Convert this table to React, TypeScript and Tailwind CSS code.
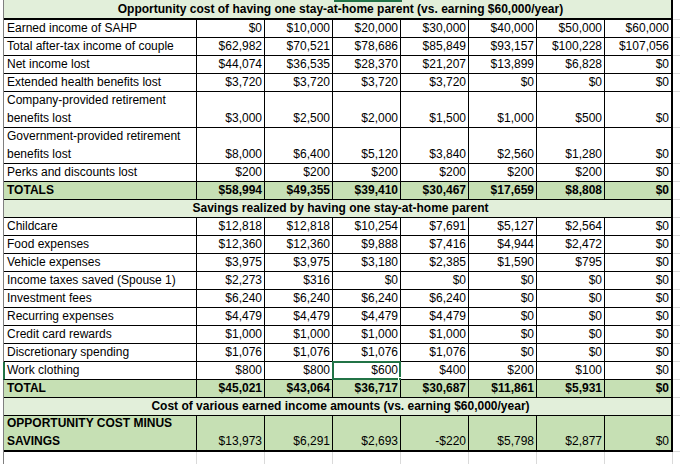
import React from "react";

type RowData = {
  label: React.ReactNode;
  values: string[];
  tall?: boolean;
  total?: boolean;
  green?: boolean;
  selectedCol?: number;
};

const opportunity: RowData[] = [
  { label: "Earned income of SAHP", values: ["$0", "$10,000", "$20,000", "$30,000", "$40,000", "$50,000", "$60,000"] },
  { label: "Total after-tax income of couple", values: ["$62,982", "$70,521", "$78,686", "$85,849", "$93,157", "$100,228", "$107,056"] },
  { label: "Net income lost", values: ["$44,074", "$36,535", "$28,370", "$21,207", "$13,899", "$6,828", "$0"] },
  { label: "Extended health benefits lost", values: ["$3,720", "$3,720", "$3,720", "$3,720", "$0", "$0", "$0"] },
  {
    label: (<>Company-provided retirement<br />benefits lost</>),
    tall: true,
    values: ["$3,000", "$2,500", "$2,000", "$1,500", "$1,000", "$500", "$0"],
  },
  {
    label: (<>Government-provided retirement<br />benefits lost</>),
    tall: true,
    values: ["$8,000", "$6,400", "$5,120", "$3,840", "$2,560", "$1,280", "$0"],
  },
  { label: "Perks and discounts lost", values: ["$200", "$200", "$200", "$200", "$200", "$200", "$0"] },
  { label: "TOTALS", total: true, values: ["$58,994", "$49,355", "$39,410", "$30,467", "$17,659", "$8,808", "$0"] },
];

const savings: RowData[] = [
  { label: "Childcare", values: ["$12,818", "$12,818", "$10,254", "$7,691", "$5,127", "$2,564", "$0"] },
  { label: "Food expenses", values: ["$12,360", "$12,360", "$9,888", "$7,416", "$4,944", "$2,472", "$0"] },
  { label: "Vehicle expenses", values: ["$3,975", "$3,975", "$3,180", "$2,385", "$1,590", "$795", "$0"] },
  { label: "Income taxes saved (Spouse 1)", values: ["$2,273", "$316", "$0", "$0", "$0", "$0", "$0"] },
  { label: "Investment fees", values: ["$6,240", "$6,240", "$6,240", "$6,240", "$0", "$0", "$0"] },
  { label: "Recurring expenses", values: ["$4,479", "$4,479", "$4,479", "$4,479", "$0", "$0", "$0"] },
  { label: "Credit card rewards", values: ["$1,000", "$1,000", "$1,000", "$1,000", "$0", "$0", "$0"] },
  { label: "Discretionary spending", values: ["$1,076", "$1,076", "$1,076", "$1,076", "$0", "$0", "$0"] },
  { label: "Work clothing", selectedCol: 2, values: ["$800", "$800", "$600", "$400", "$200", "$100", "$0"] },
  { label: "TOTAL", total: true, values: ["$45,021", "$43,064", "$36,717", "$30,687", "$11,861", "$5,931", "$0"] },
];

const Row = ({ row }: { row: RowData }) => {
  const h = row.tall ? "h-[36px]" : "h-[18px]";
  const bg = row.total || row.green ? "bg-[#c6e0b4]" : "bg-white";
  return (
    <>
      <div
        className={`${h} ${bg} border-b border-r border-black px-[3px] flex items-end leading-[18px] ${row.total || row.green ? "font-bold" : ""} ${row.selectedCol !== undefined ? "border-l-2 border-l-[#217346] -ml-[1px] pl-[2px]" : ""}`}
      >
        <span>{row.label}</span>
      </div>
      {row.values.map((v, i) => (
        <div
          key={i}
          className={`${h} ${bg} relative border-b border-black ${i === 6 ? "border-r-2" : "border-r"} px-[2px] flex items-end justify-end leading-[18px] ${row.total ? "font-bold" : ""}`}
        >
          {v}
          {row.selectedCol === i && (
            <>
              <div className="absolute -left-[1px] -top-[1px] -right-[1px] -bottom-[1px] border-2 border-[#217346]" />
              <div className="absolute -right-[3px] -bottom-[3px] w-[5px] h-[5px] bg-[#217346] border border-white" />
            </>
          )}
        </div>
      ))}
      <div className={`${h} border-b border-[#dadada]`} />
    </>
  );
};

const Banner = ({ text, title }: { text: string; title?: boolean }) => (
  <>
    <div
      className={`col-span-8 ${title ? "h-[20px] border-b-2" : "h-[18px] border-b"} bg-[#e2efda] border-black border-r-2 flex items-end justify-center font-bold leading-[18px]`}
    >
      <span className="pl-[6px]">{text}</span>
    </div>
    <div className={`${title ? "h-[20px]" : "h-[18px]"} border-b border-[#dadada]`} />
  </>
);

export default function App() {
  return (
    <div className="w-[680px] h-[464px] overflow-hidden bg-white text-[12px] text-black font-['Liberation_Sans',Arial,sans-serif]">
      <div className="relative ml-[3px] border-l border-[#7f7f7f] grid grid-cols-[193px_repeat(7,68px)_1fr]">
        <div className="absolute top-0 left-[330px] w-[68px] h-[2px] bg-[#217346]" />
        <Banner title text="Opportunity cost of having one stay-at-home parent (vs. earning $60,000/year)" />
        {opportunity.map((r, i) => (
          <Row key={"o" + i} row={r} />
        ))}
        <Banner text="Savings realized by having one stay-at-home parent" />
        {savings.map((r, i) => (
          <Row key={"s" + i} row={r} />
        ))}
        <Banner text="Cost of various earned income amounts (vs. earning $60,000/year)" />
        <div className="h-[36px] bg-[#c6e0b4] border-b-2 border-r border-black px-[3px] flex items-end font-bold leading-[18px]">
          <span>
            OPPORTUNITY COST MINUS
            <br />
            SAVINGS
          </span>
        </div>
        {["$13,973", "$6,291", "$2,693", "-$220", "$5,798", "$2,877", "$0"].map((v, i) => (
          <div
            key={i}
            className={`h-[36px] bg-[#c6e0b4] border-b-2 border-black ${i === 6 ? "border-r-2" : "border-r"} px-[2px] flex items-end justify-end leading-[18px]`}
          >
            {v}
          </div>
        ))}
        <div className="h-[36px] border-b border-[#dadada]" />
        {Array.from({ length: 8 }).map((_, i) => (
          <div key={"e" + i} className="h-[18px] border-r border-[#dadada]" />
        ))}
        <div className="h-[18px]" />
      </div>
    </div>
  );
}
